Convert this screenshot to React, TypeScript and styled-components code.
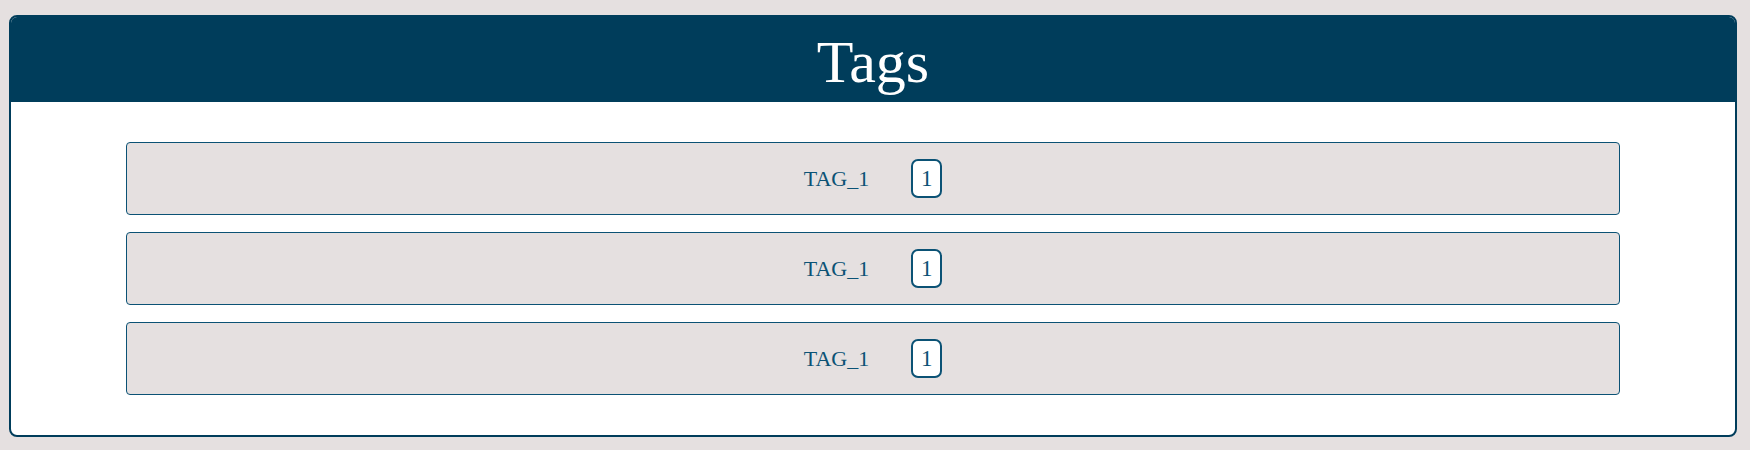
import React from "react";
import styled, { createGlobalStyle } from "styled-components";

const GlobalStyle = createGlobalStyle`
  html, body {
    margin: 0;
    padding: 0;
    background: #e5e0e0;
    font-family: "Liberation Serif", "Times New Roman", serif;
  }
`;

const Page = styled.div`
  padding: 15px 13px 13px 9px;
`;

const Card = styled.section`
  border: 2px solid #003d5b;
  border-radius: 8px;
  background: #ffffff;
  overflow: hidden;
`;

const Header = styled.header`
  height: 85px;
  background: #003d5b;
  display: flex;
  align-items: center;
  justify-content: center;
`;

const Title = styled.h1`
  margin: 0;
  color: #ffffff;
  font-size: 60px;
  font-weight: 400;
  line-height: 1;
  padding-top: 4px;
`;

const List = styled.div`
  padding: 40px 115px;
  display: flex;
  flex-direction: column;
  gap: 17px;
`;

const Row = styled.div`
  height: 73px;
  box-sizing: border-box;
  border: 1px solid #0b5275;
  border-radius: 4px;
  background: #e5e0e0;
  display: flex;
  align-items: center;
  justify-content: center;
  gap: 42px;
`;

const Name = styled.span`
  color: #0b5275;
  font-size: 22px;
  line-height: 1;
`;

const Badge = styled.span`
  box-sizing: border-box;
  width: 31px;
  height: 39px;
  border: 2px solid #0b5275;
  border-radius: 7px;
  background: #ffffff;
  color: #0b5275;
  font-size: 23px;
  display: flex;
  align-items: center;
  justify-content: center;
`;

const tags = [
  { name: "TAG_1", count: 1 },
  { name: "TAG_1", count: 1 },
  { name: "TAG_1", count: 1 },
];

export default function App() {
  return (
    <>
      <GlobalStyle />
      <Page>
        <Card>
          <Header>
            <Title>Tags</Title>
          </Header>
          <List>
            {tags.map((t, i) => (
              <Row key={i}>
                <Name>{t.name}</Name>
                <Badge>{t.count}</Badge>
              </Row>
            ))}
          </List>
        </Card>
      </Page>
    </>
  );
}
